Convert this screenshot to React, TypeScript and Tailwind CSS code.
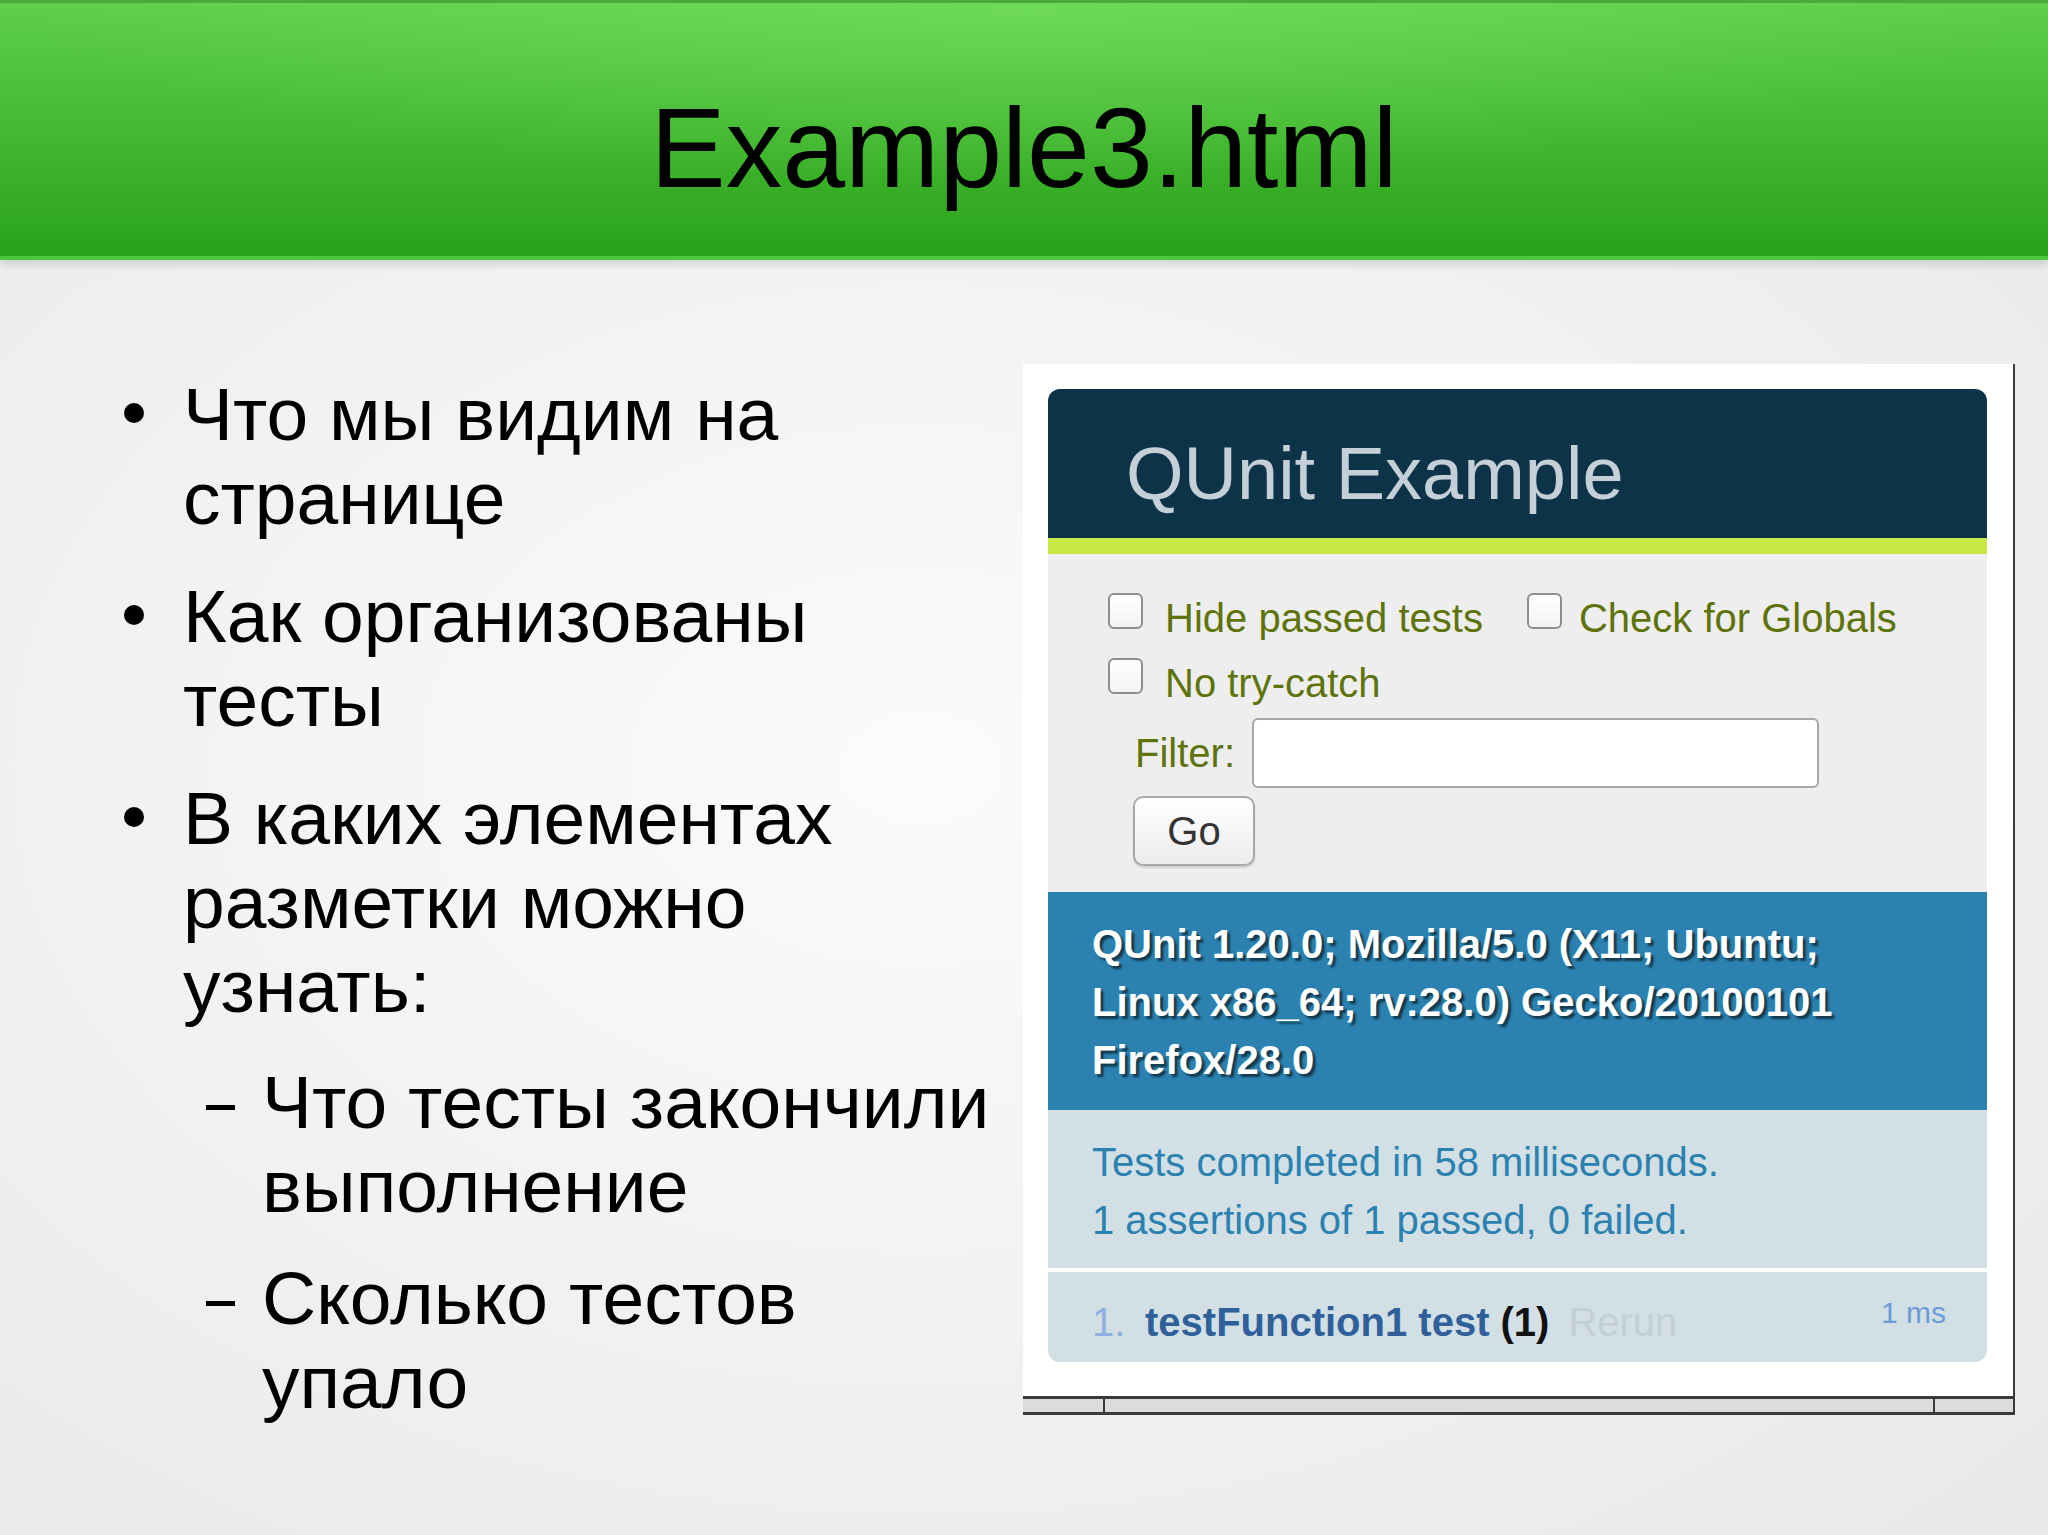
import React from "react";

function Checkbox({ className = "" }: { className?: string }) {
  return (
    <span
      className={
        "mt-[7px] h-[36px] w-[35px] shrink-0 rounded-[6px] border-2 border-[#8e8e8e] bg-[image:linear-gradient(to_bottom,#ffffff,#f3f3f3)] " +
        className
      }
    />
  );
}

function QUnitPanel() {
  return (
    <div className="w-[939px] font-['Liberation_Sans',Arial,sans-serif]">
      {/* header */}
      <div className="h-[149px] rounded-t-[12px] bg-[#0d3349] pl-[78px] pt-[48px]">
        <div className="whitespace-nowrap text-[74px] leading-none text-[#c5cfd7]">QUnit Example</div>
      </div>
      {/* banner */}
      <div className="h-4 bg-[#c6e746]" />
      {/* toolbar */}
      <div className="h-[338px] bg-[#eeeeee] pl-[60px] pt-[32px] text-[40px] text-[#5e740b]">
        <div className="flex h-[65px] items-start leading-[65px]">
          <Checkbox />
          <span className="ml-[22px] whitespace-nowrap">Hide passed tests</span>
          <Checkbox className="ml-[44px]" />
          <span className="ml-[17px] whitespace-nowrap">Check for Globals</span>
        </div>
        <div className="flex h-[65px] items-start leading-[65px]">
          <Checkbox />
          <span className="ml-[22px] whitespace-nowrap">No try-catch</span>
        </div>
        <div className="mt-[2px] flex h-[70px] items-center pl-[27px]">
          <span className="whitespace-nowrap leading-[46px]">Filter:</span>
          <input
            type="text"
            readOnly
            className="ml-[17px] h-[70px] w-[567px] rounded-[6px] border-2 border-[#a7a7a7] bg-white outline-none"
          />
        </div>
        <button
          type="button"
          className="ml-[25px] mt-[8px] flex h-[70px] w-[122px] items-center justify-center rounded-[10px] border-2 border-[#a8a8a8] bg-[image:linear-gradient(to_bottom,#ffffff,#ececec)] text-[40px] leading-none text-[#333] shadow-[0_2px_2px_rgba(0,0,0,0.12)]"
        >
          Go
        </button>
      </div>
      {/* user agent */}
      <div className="h-[218px] bg-[#2b81af] pl-[44px] pt-[23px] text-[40px] font-bold leading-[58px] text-white [text-shadow:3px_3px_2px_rgba(0,0,0,0.55)]">
        <div className="whitespace-nowrap">QUnit 1.20.0; Mozilla/5.0 (X11; Ubuntu;</div>
        <div className="whitespace-nowrap">Linux x86_64; rv:28.0) Gecko/20100101</div>
        <div className="whitespace-nowrap">Firefox/28.0</div>
      </div>
      {/* test result */}
      <div className="h-[158px] bg-[#d2e0e6] pl-[44px] pt-[23px] text-[40px] leading-[58px] text-[#2b81af]">
        <div className="whitespace-nowrap">Tests completed in 58 milliseconds.</div>
        <div className="whitespace-nowrap">1 assertions of 1 passed, 0 failed.</div>
      </div>
      <div className="h-1 bg-white" />
      {/* tests */}
      <div className="flex h-[90px] items-start rounded-b-[12px] bg-[#d2e0e6] pl-[44px] pr-[41px] pt-[21px] text-[40px] leading-[58px]">
        <span className="w-[53px] shrink-0 text-[#8fb0de]">1.</span>
        <span className="whitespace-nowrap font-bold text-[#30609a]">testFunction1 test</span>
        <span className="ml-[11px] whitespace-nowrap font-bold text-[#111]">(1)</span>
        <span className="ml-[19px] whitespace-nowrap text-[#c3cfd5]">Rerun</span>
        <span className="ml-auto whitespace-nowrap text-[30px] leading-[40px] text-[#6c9bd8]">1 ms</span>
      </div>
    </div>
  );
}

export default function App() {
  return (
    <div className="flex h-[1535px] w-[2048px] flex-col overflow-hidden bg-[image:radial-gradient(ellipse_at_45%_50%,#fbfbfc_0%,#f2f2f4_50%,#e8e8ea_100%)] font-['Liberation_Sans',Arial,sans-serif] text-black">
      {/* title bar */}
      <header className="relative z-10 h-[260px] shrink-0 border-b-4 border-t-[3px] border-b-[#4cc83a] border-t-[#4aa83c] bg-[image:radial-gradient(ellipse_70%_100%_at_50%_0%,rgba(140,240,110,0.35),transparent_70%),linear-gradient(to_bottom,#5fcf4b,#29a219)] pt-[89px] text-center shadow-[0_5px_8px_rgba(0,0,0,0.12)]">
        <h1 className="whitespace-nowrap text-[113px] font-normal leading-none text-black">Example3.html</h1>
      </header>

      <div className="flex flex-1">
        {/* bullets */}
        <div className="flex-1 pl-[124px] pt-[112px] text-[75px] leading-[84px]">
          <div className="flex">
            <span className="mt-[31px] h-5 w-5 shrink-0 rounded-full bg-black" />
            <div className="ml-[39px] whitespace-nowrap">
              Что мы видим на
              <br />
              странице
            </div>
          </div>
          <div className="mt-[34px] flex">
            <span className="mt-[31px] h-5 w-5 shrink-0 rounded-full bg-black" />
            <div className="ml-[39px] whitespace-nowrap">
              Как организованы
              <br />
              тесты
            </div>
          </div>
          <div className="mt-[34px] flex">
            <span className="mt-[31px] h-5 w-5 shrink-0 rounded-full bg-black" />
            <div className="ml-[39px] whitespace-nowrap">
              В каких элементах
              <br />
              разметки можно
              <br />
              узнать:
            </div>
          </div>
          <div className="mt-[32px] flex pl-[82px]">
            <span className="mt-[45px] h-[5px] w-[29px] shrink-0 bg-black" />
            <div className="ml-[27px] whitespace-nowrap">
              Что тесты закончили
              <br />
              выполнение
            </div>
          </div>
          <div className="mt-[28px] flex pl-[82px]">
            <span className="mt-[45px] h-[5px] w-[29px] shrink-0 bg-black" />
            <div className="ml-[27px] whitespace-nowrap">
              Сколько тестов
              <br />
              упало
            </div>
          </div>
        </div>

        {/* browser screenshot */}
        <div className="mr-[33px] mt-[104px] flex w-[992px] shrink-0 flex-col self-start">
          <div className="border-r-2 border-[#3a3a3a] bg-white pb-[34px] pl-[25px] pr-[26px] pt-[25px]">
            <QUnitPanel />
          </div>
          <div className="flex h-[19px] border-y-[3px] border-r-2 border-[#3a3a3a] bg-[#dcdcdc]">
            <div className="w-[82px] border-r-2 border-[#3a3a3a]" />
            <div className="flex-1 border-r-2 border-[#3a3a3a]" />
            <div className="w-[78px]" />
          </div>
        </div>
      </div>
    </div>
  );
}
